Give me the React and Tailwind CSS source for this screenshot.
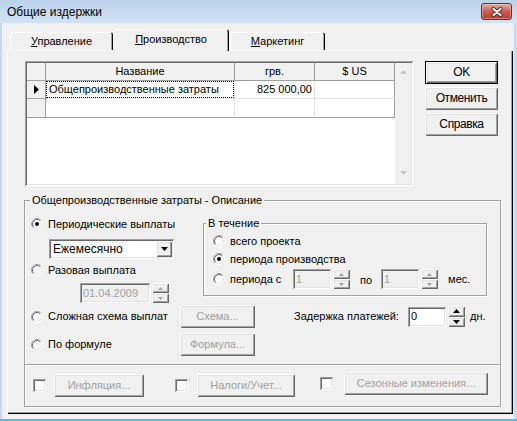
import React from "react";

const RAISED =
  "shadow-[inset_1px_1px_0_#fff,inset_-1px_-1px_0_#696969,inset_2px_2px_0_#e3e3e3,inset_-2px_-2px_0_#a0a0a0]";
const SUNKEN =
  "shadow-[inset_1px_1px_0_#a0a0a0,inset_-1px_-1px_0_#fff,inset_2px_2px_0_#696969,inset_-2px_-2px_0_#e3e3e3]";
const ETCHED = "border border-[#a0a0a0] shadow-[1px_1px_0_#fff,inset_1px_1px_0_#fff]";
const TAB =
  "rounded-t-[3px] shadow-[inset_1px_1px_0_#fff,inset_-1px_0_0_#000,inset_-2px_0_0_#a0a0a0]";
const PAGE =
  "shadow-[inset_1px_1px_0_#fff,inset_-1px_-1px_0_#000,inset_-2px_-2px_0_#a0a0a0]";

function Radio({ checked }) {
  return (
    <svg width="12" height="12" viewBox="0 0 12 12" className="shrink-0">
      <circle cx="6" cy="6" r="5" fill="#fff" />
      <path d="M2.11 9.89A5.5 5.5 0 0 1 9.89 2.11" stroke="#a0a0a0" fill="none" />
      <path d="M9.89 2.11A5.5 5.5 0 0 1 2.11 9.89" stroke="#ffffff" fill="none" />
      <path d="M2.82 9.18A4.5 4.5 0 0 1 9.18 2.82" stroke="#696969" fill="none" />
      <path d="M9.18 2.82A4.5 4.5 0 0 1 2.82 9.18" stroke="#e3e3e3" fill="none" />
      {checked && <circle cx="6" cy="6" r="2" fill="#000" />}
    </svg>
  );
}

function Check() {
  return <div className={`w-[13px] h-[13px] shrink-0 bg-white ${SUNKEN}`} />;
}

function Tri({ dir, color, w = 5, h = 3 }) {
  const d = dir === "up" ? `M0 ${h}L${w / 2} 0L${w} ${h}Z` : `M0 0L${w} 0L${w / 2} ${h}Z`;
  return (
    <svg width={w} height={h} viewBox={`0 0 ${w} ${h}`} className="block">
      <path d={d} fill={color} />
    </svg>
  );
}

function Spin({ disabled, cls }) {
  const c = disabled ? "#a0a0a0" : "#000";
  const w = disabled ? 5 : 7;
  const h = disabled ? 3 : 4;
  return (
    <div className={`flex flex-col bg-[#f0f0f0] ${cls}`}>
      <div className={`flex-1 flex items-center justify-center ${RAISED}`}>
        <Tri dir="up" color={c} w={w} h={h} />
      </div>
      <div className={`flex-1 flex items-center justify-center ${RAISED}`}>
        <Tri dir="down" color={c} w={w} h={h} />
      </div>
    </div>
  );
}

function Btn({ cls, disabled, children }) {
  return (
    <div
      className={`flex items-center justify-center bg-[#f0f0f0] ${RAISED} ${cls} ${
        disabled ? "text-[#a0a0a0]" : "text-black"
      }`}
    >
      {children}
    </div>
  );
}

function Grid() {
  const hdr = "bg-[#f0f0f0] border-r border-b border-[#a0a0a0] flex items-center justify-center";
  return (
    <div className={`ml-[1px] w-[388px] h-[125px] bg-white p-[2px] flex ${SUNKEN}`}>
      <div className="w-[368px] flex flex-col">
        <div className="flex h-[18px]">
          <div className={`w-[19px] ${hdr}`} />
          <div className={`w-[189px] ${hdr}`}>Название</div>
          <div className={`w-[80px] ${hdr}`}>грв.</div>
          <div className={`w-[80px] ${hdr}`}>$ US</div>
        </div>
        <div className="flex h-[18px]">
          <div className={`w-[19px] ${hdr}`}>
            <svg width="5" height="9" viewBox="0 0 5 9" className="block">
              <path d="M0 0L5 4.5L0 9Z" fill="#000" />
            </svg>
          </div>
          <div className="w-[189px] border-r border-b border-[#e3e3e3] flex">
            <div className="flex-1 border border-dotted border-black flex items-center pl-[2px]">
              Общепроизводственные затраты
            </div>
          </div>
          <div className="w-[80px] border-r border-b border-[#e3e3e3] flex items-center justify-end pr-[2px]">
            825 000,00
          </div>
          <div className="w-[80px] border-r border-b border-r-[#a0a0a0] border-b-[#e3e3e3]" />
        </div>
        <div className="flex h-[19px]">
          <div className={`w-[19px] ${hdr}`} />
          <div className="w-[189px] border-r border-b border-r-[#e3e3e3] border-b-[#a0a0a0]" />
          <div className="w-[80px] border-r border-b border-r-[#e3e3e3] border-b-[#a0a0a0]" />
          <div className="w-[80px] border-r border-b border-[#a0a0a0]" />
        </div>
      </div>
      <div className="w-[16px] bg-[#f0f0f0] flex flex-col items-center justify-between pt-[7px] pb-[9px]">
        <Tri dir="up" color="#c4c4c4" w={7} h={4} />
        <Tri dir="down" color="#c4c4c4" w={7} h={4} />
      </div>
    </div>
  );
}

export default function App() {
  const bigFont = "text-[12px] tracking-[-0.4px]";
  return (
    <div className="w-[517px] h-[421px] flex flex-col bg-[#c6d9f0] font-['Liberation_Sans',Arial,sans-serif] text-[11px] leading-[13px] text-black overflow-hidden">
      {/* Title bar */}
      <div className="h-[23px] shrink-0 flex items-center pl-[7px] pr-[5px] bg-gradient-to-b from-[#bcd2ec] to-[#d3e3f4]">
        <span className="flex-1 text-[12px] leading-[14px]">Общие издержки</span>
        <div className="w-[31px] h-[17px] rounded-[3px] border border-[#6e2b24] bg-gradient-to-b from-[#e7aaa1] via-[#cf5b4d] to-[#b9392c] flex items-center justify-center shadow-[inset_0_0_0_1px_rgba(255,255,255,0.35)]">
          <svg width="12" height="10" viewBox="0 0 12 10" className="block">
            <path d="M2.5 2L9.5 8M9.5 2L2.5 8" stroke="#4d2a26" strokeWidth="4" strokeLinecap="round" />
            <path d="M2.5 2L9.5 8M9.5 2L2.5 8" stroke="#fff" strokeWidth="2.2" strokeLinecap="round" />
          </svg>
        </div>
      </div>

      {/* Client area */}
      <div className="flex-1 ml-[2px] mr-[3px] bg-[#f0f0f0] pl-[5px] pt-[6px] flex flex-col">
        {/* Tabs */}
        <div className="flex items-end h-[21px] pl-[3px]">
          <div className={`w-[103px] h-[18px] flex items-center justify-center ${TAB}`}>
            <span>
              <span className="underline">У</span>правление
            </span>
          </div>
          <div
            className={`w-[116px] h-[22px] -mb-px relative z-10 bg-[#f0f0f0] flex items-center justify-center pb-[1px] ${TAB}`}
          >
            <span>
              <span className="underline">П</span>роизводство
            </span>
          </div>
          <div className={`ml-[1px] w-[95px] h-[18px] flex items-center justify-center ${TAB}`}>
            <span>
              <span className="underline">М</span>аркетинг
            </span>
          </div>
        </div>

        {/* Page */}
        <div className={`w-[506px] h-[364px] pt-[11px] pl-[17px] flex flex-col ${PAGE}`}>
          <div className="flex items-start">
            <Grid />
            <div className={`ml-[12px] flex flex-col gap-[3px] ${bigFont}`}>
              <div className="w-[73px] h-[23px] border border-black flex">
                <Btn cls="flex-1">OK</Btn>
              </div>
              <Btn cls="w-[73px] h-[23px]">Отменить</Btn>
              <Btn cls="w-[73px] h-[23px]">Справка</Btn>
            </div>
          </div>

          {/* Group box */}
          <div className={`mt-[14px] w-[477px] h-[165px] flex flex-col ${ETCHED}`}>
            <div className="self-start -mt-[7px] ml-[5px] px-[2px] h-[13px] bg-[#f0f0f0]">
              Общепроизводственные затраты - Описание
            </div>
            <div className="flex items-start">
              {/* left column */}
              <div className="w-[178px] pl-[6px] pt-[7px] flex flex-col">
                <div className="h-[20px] flex items-center">
                  <Radio checked />
                  <span className="ml-[5px]">Периодические выплаты</span>
                </div>
                <div className={`mt-[5px] ml-[18px] w-[125px] h-[20px] bg-white p-[2px] flex ${SUNKEN}`}>
                  <div className="flex-1 flex items-center pl-[2px] text-[12px]">Ежемесячно</div>
                  <div className={`w-[16px] bg-[#f0f0f0] flex items-center justify-center ${RAISED}`}>
                    <Tri dir="down" color="#000" w={7} h={4} />
                  </div>
                </div>
                <div className="mt-[1px] h-[20px] flex items-center">
                  <Radio />
                  <span className="ml-[5px]">Разовая выплата</span>
                </div>
                <div className="mt-[3px] ml-[49px] h-[20px] flex">
                  <div
                    className={`w-[70px] bg-[#f0f0f0] flex items-center pl-[3px] text-[#a0a0a0] ${SUNKEN}`}
                  >
                    01.04.2009
                  </div>
                  <Spin disabled cls="ml-[2px] w-[17px]" />
                </div>
              </div>

              {/* В течение */}
              <div className={`mt-[16px] w-[284px] h-[73px] flex flex-col ${ETCHED}`}>
                <div className="self-start -mt-[7px] ml-[2px] px-[2px] h-[13px] bg-[#f0f0f0]">В течение</div>
                <div className="pl-[9px] flex flex-col">
                  <div className="mt-[2px] h-[18px] flex items-center">
                    <Radio />
                    <span className="ml-[5px]">всего проекта</span>
                  </div>
                  <div className="h-[18px] flex items-center">
                    <Radio checked />
                    <span className="ml-[5px]">периода производства</span>
                  </div>
                  <div className="mt-[1px] h-[20px] flex items-center">
                    <Radio />
                    <span className="ml-[5px] w-[63px]">периода с</span>
                    <div
                      className={`w-[38px] h-[20px] bg-[#f0f0f0] flex items-center pl-[3px] text-[#a0a0a0] ${SUNKEN}`}
                    >
                      1
                    </div>
                    <Spin disabled cls="ml-[2px] w-[17px] h-[20px]" />
                    <span className="ml-[10px] mt-[3px]">по</span>
                    <div
                      className={`ml-[9px] w-[38px] h-[20px] bg-[#f0f0f0] flex items-center pl-[3px] text-[#a0a0a0] ${SUNKEN}`}
                    >
                      1
                    </div>
                    <Spin disabled cls="ml-[2px] w-[17px] h-[20px]" />
                    <span className="ml-[10px]">мес.</span>
                  </div>
                </div>
              </div>
            </div>

            {/* Сложная схема row */}
            <div className="mt-[2px] h-[23px] pl-[6px] flex items-center">
              <div className="w-[149px] flex items-center">
                <Radio />
                <span className="ml-[5px]">Сложная схема выплат</span>
              </div>
              <Btn disabled cls="w-[75px] h-[23px]">
                Схема...
              </Btn>
              <span className="ml-[39px] w-[114px]">Задержка платежей:</span>
              <div className={`w-[38px] h-[20px] bg-white flex items-center pl-[3px] ${SUNKEN}`}>0</div>
              <Spin cls="ml-[2px] w-[17px] h-[21px]" />
              <span className="ml-[5px]">дн.</span>
            </div>

            {/* По формуле row */}
            <div className="mt-[5px] h-[23px] pl-[6px] flex items-center">
              <div className="w-[149px] flex items-center">
                <Radio />
                <span className="ml-[5px]">По формуле</span>
              </div>
              <Btn disabled cls="w-[75px] h-[23px]">
                Формула...
              </Btn>
            </div>
          </div>

          {/* Bottom panel */}
          <div className={`-mt-px w-[477px] h-[43px] flex items-start ${ETCHED}`}>
            <div className="ml-[8px] mt-[9px] flex items-center">
              <Check />
              <Btn disabled cls="ml-[8px] w-[90px] h-[23px]">
                Инфляция...
              </Btn>
            </div>
            <div className="ml-[31px] mt-[9px] flex items-center">
              <Check />
              <Btn disabled cls="ml-[9px] w-[98px] h-[23px]">
                Налоги/Учет...
              </Btn>
            </div>
            <div className="ml-[25px] mt-[7px] flex items-center">
              <Check />
              <Btn disabled cls="ml-[11px] w-[144px] h-[23px]">
                Сезонные изменения...
              </Btn>
            </div>
          </div>
        </div>
      </div>
      <div className="h-[2px] shrink-0 bg-[#3ec3ee]" />
    </div>
  );
}
